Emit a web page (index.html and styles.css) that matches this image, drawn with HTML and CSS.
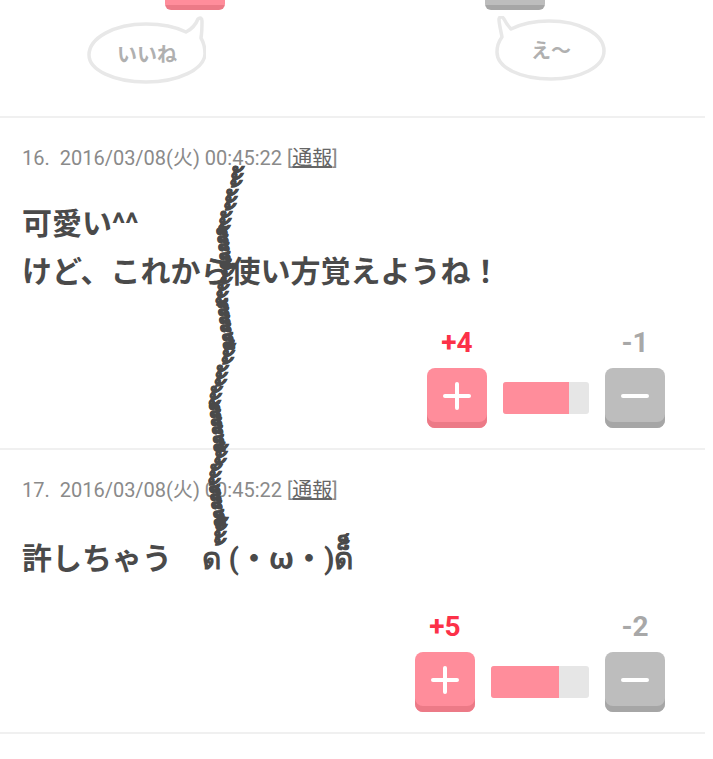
FILE: index.html
```html
<!DOCTYPE html>
<html lang="ja">
<head>
<meta charset="utf-8">
<title>comments</title>
<link rel="stylesheet" href="styles.css">
</head>
<body>
<main class="page">
  <section class="top">
    <div class="top-buttons">
      <div class="stub stub-plus"></div>
      <div class="stub stub-minus"></div>
    </div>
    <div class="bubbles">
      <div class="bubble bubble-left">
        <svg class="bubble-shape" width="122" height="68" viewBox="0 0 122 68"><path d="M5 39C5 22 30 8 62 8C78 8 92 11 102 16C108 13 112 8 114 3C116 1 118 2 118 5C118 11 118 16 117 22C120 27 121 33 121 38C120 53 95 66 62 66C30 66 5 54 5 39Z"/></svg>
        <span class="bubble-text">いいね</span>
      </div>
      <div class="bubble bubble-right">
        <svg class="bubble-shape" width="114" height="66" viewBox="0 0 114 66"><path d="M3 36C3 29 5 25 8 21C7 15 5 8 5 3C6 0 8 0 10 3C12 7 14 10 17 13C27 8 40 5 55 5C86 5 110 18 110 35C110 51 86 63 57 63C27 63 3 52 3 36Z"/></svg>
        <span class="bubble-text">え〜</span>
      </div>
    </div>
  </section>

  <article class="comment comment-16">
    <p class="meta">16.&nbsp; 2016/03/08(火) 00:45:22 [<a class="report">通報</a>]</p>
    <p class="body">可愛い^^<br>けど、これから使い方覚えようね！</p>
    <div class="votes votes-16">
      <div class="vote-col"><span class="count count-plus">+4</span><div class="btn btn-plus"><span class="bar-h"></span><span class="bar-v"></span></div></div>
      <div class="meter"><div class="meter-fill fill-16"></div></div>
      <div class="vote-col"><span class="count count-minus">-1</span><div class="btn btn-minus"><span class="bar-h"></span></div></div>
    </div>
  </article>

  <article class="comment comment-17">
    <p class="meta">17.&nbsp; 2016/03/08(火) 00:45:22 [<a class="report">通報</a>]</p>
    <p class="body">許しちゃう　ด (・<span class="omega">ω</span>・)ด็็</p>
    <div class="votes votes-17">
      <div class="vote-col"><span class="count count-plus">+5</span><div class="btn btn-plus"><span class="bar-h"></span><span class="bar-v"></span></div></div>
      <div class="meter"><div class="meter-fill fill-17"></div></div>
      <div class="vote-col"><span class="count count-minus">-2</span><div class="btn btn-minus"><span class="bar-h"></span></div></div>
    </div>
  </article>

  <div class="squiggle" id="squiggle"></div>
</main>
<script src="squiggle.js"></script>
</body>
</html>
```
FILE: styles.css
```css
* { box-sizing: border-box; }
html, body { margin: 0; background: #fff; }
body { font-family: Roboto, "Noto Sans CJK JP", "DejaVu Sans", sans-serif; overflow: hidden; height: 759px; }
.page { position: relative; width: 705px; }
.top { height: 118px; border-bottom: 2px solid #f0f0f0; }
.top-buttons { display: flex; height: 10px; padding-left: 165px; gap: 260px; }
.stub { width: 60px; height: 10px; border-radius: 0 0 6px 6px; }
.stub-plus { background: linear-gradient(#ff8d9b 5px, #ec7a87 5px); }
.stub-minus { background: linear-gradient(#bdbdbd 5px, #a6a6a6 5px); }
.bubbles { display: flex; padding: 6px 0 0 84px; gap: 288px; }
.bubble { position: relative; display: flex; align-items: center; justify-content: center; }
.bubble-left { width: 122px; height: 68px; padding: 6px 0 0 4px; }
.bubble-right { width: 114px; height: 66px; }
.bubble-shape { position: absolute; left: 0; top: 0; }
.bubble-shape path { fill: #fff; stroke: #e8e8e8; stroke-width: 3.5; stroke-linejoin: round; }
.bubble-text { position: relative; font-size: 20px; font-weight: 700; color: #b0b0b0; }
.comment { position: relative; border-bottom: 2px solid #f0f0f0; padding: 27px 0 0 22px; }
.comment-16 { height: 332px; }
.comment-17 { height: 284px; }
.meta { margin: 0; font-size: 20px; line-height: 26px; color: #8a8a8a; }
.report { color: #666; text-decoration: underline; }
.body { margin: 29px 0 0; font-size: 30px; line-height: 48px; font-weight: 700; color: #4a4a4a; }
.omega { font-family: "Noto Sans CJK JP", sans-serif; font-feature-settings: "fwid"; }
.votes { position: absolute; right: 40px; display: flex; align-items: flex-end; }
.votes-16 { top: 210px; }
.votes-17 { top: 162px; }
.vote-col { display: flex; flex-direction: column; align-items: center; gap: 10px; }
.count { font-size: 28px; line-height: 30px; font-weight: 700; }
.count-plus { color: #fc3148; }
.count-minus { color: #a8a8a8; }
.btn { position: relative; width: 60px; height: 60px; border-radius: 8px; }
.btn-plus { background: #ff8d9b; box-shadow: inset 0 -6px 0 #ec7a87; }
.btn-minus { background: #bdbdbd; box-shadow: inset 0 -6px 0 #a6a6a6; }
.bar-h { position: absolute; left: 16px; top: 26px; width: 28px; height: 4px; border-radius: 2px; background: #fff; }
.bar-v { position: absolute; left: 28px; top: 14px; width: 4px; height: 28px; border-radius: 2px; background: #fff; }
.meter { width: 86px; height: 32px; margin: 0 16px 14px; background: #e6e6e6; border-radius: 3px; overflow: hidden; }
.votes-17 .meter { width: 98px; }
.meter-fill { height: 100%; background: #ff8d9b; }
.fill-16 { width: 66px; }
.fill-17 { width: 68px; }

/* Stacked combining marks that lie over both comments */
.squiggle { position: absolute; inset: 0; pointer-events: none; }
.mark { position: absolute; width: 20px; height: 19px; font-size: 30px; line-height: 19px; font-weight: 700; color: #4a4a4a; white-space: nowrap; -webkit-text-stroke: 0.4px #4a4a4a; transform-origin: 8px -5px; }
```
FILE: squiggle.js
```js
// The wavering stack of combining marks, as a path of (x, y) points from its foot upward.
var points = [[218,545],[223,520],[212,485],[223,445],[213,407],[232,343],[220,305],[229,262],[222,232],[240,165]];
var markHeight = 6.5;
var groupHeight = 19.5;
var host = document.getElementById('squiggle');
for (var i = 0; i + 1 < points.length; i++) {
  var a = points[i], b = points[i + 1];
  var rise = a[1] - b[1];
  var groups = Math.max(1, Math.floor(rise / groupHeight));
  var perGroup = Math.round(rise / groups / markHeight);
  var mark = b[0] > a[0] ? '\u0E49' : '\u0E47';
  var slant = Math.atan((b[0] - a[0]) / rise) * 180 / Math.PI / 2;
  for (var n = 0; n < groups; n++) {
    var t = n / groups;
    var span = document.createElement('span');
    span.className = 'mark';
    span.textContent = '\u00A0' + new Array(perGroup + 1).join(mark);
    span.style.left = (a[0] + (b[0] - a[0]) * t - 2) + 'px';
    span.style.top = (a[1] + (b[1] - a[1]) * t + 5) + 'px';
    span.style.transform = 'skewX(' + (-slant) + 'deg)';
    host.appendChild(span);
  }
}
```
